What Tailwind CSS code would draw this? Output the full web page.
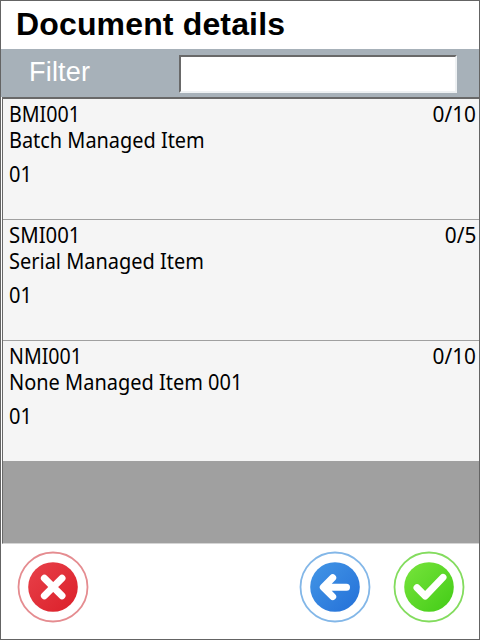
<!DOCTYPE html>
<html lang="en">
<head>
<meta charset="utf-8">
<title>Document details</title>
<script src="https://cdn.jsdelivr.net/npm/@tailwindcss/browser@4"></script>
</head>
<body class="w-[480px] h-[640px] overflow-hidden">
<div class="w-[480px] h-[640px] flex flex-col border border-[#646464] bg-white text-black">
  <header class="h-12 shrink-0 pl-[15px] font-['Liberation_Sans',sans-serif] font-bold text-[32px] tracking-[0.15px] leading-[46px] whitespace-nowrap">Document details</header>
  <div class="h-[48px] shrink-0 bg-[#a7b1b9] flex items-start">
    <label for="filter" class="w-[178px] pl-7 font-['Liberation_Sans',sans-serif] text-[27px] tracking-[0.2px] leading-[46px] text-white">Filter</label>
    <input id="filter" type="text" class="mt-[6px] w-[278px] h-[38px] bg-white border-2 border-t-[#696969] border-l-[#696969] border-b-[#eef1f3] border-r-[#eef1f3] outline-none">
  </div>
  <main class="h-[447px] shrink-0 ml-px bg-[#a0a0a0] border-t-2 border-l border-[#696969] border-b border-b-[#d5d5d5] font-['Noto_Sans',sans-serif] text-[22px] leading-[26px]">
    <section class="h-[121px] bg-[#f5f5f5] border-b border-[#a0a0a0] pl-[6px] pr-[3px] pt-px whitespace-nowrap">
      <div class="flex justify-between"><span class="origin-left scale-x-[0.893]">BMI001</span><span class="origin-right scale-x-[0.945]">0/10</span></div>
      <div class="w-fit origin-left scale-x-[0.905]">Batch Managed Item</div>
      <div class="w-fit mt-2 origin-left scale-x-[0.91]">01</div>
    </section>
    <section class="h-[121px] bg-[#f5f5f5] border-b border-[#a0a0a0] pl-[6px] pr-[3px] pt-px whitespace-nowrap">
      <div class="flex justify-between"><span class="origin-left scale-x-[0.925]">SMI001</span><span class="origin-right scale-x-[0.945]">0/5</span></div>
      <div class="w-fit origin-left scale-x-[0.908]">Serial Managed Item</div>
      <div class="w-fit mt-2 origin-left scale-x-[0.91]">01</div>
    </section>
    <section class="h-[120px] bg-[#f5f5f5] pl-[6px] pr-[3px] pt-px whitespace-nowrap">
      <div class="flex justify-between"><span class="origin-left scale-x-[0.89]">NMI001</span><span class="origin-right scale-x-[0.945]">0/10</span></div>
      <div class="w-fit origin-left scale-x-[0.908]">None Managed Item 001</div>
      <div class="w-fit mt-2 origin-left scale-x-[0.91]">01</div>
    </section>
  </main>
  <footer class="flex-1 flex items-start pt-[7px] pl-4">
    <button aria-label="Cancel" class="mr-[210px]">
      <svg class="block" width="72" height="72" viewBox="0 0 72 72" fill="none">
        <defs><linearGradient id="r" x1="0" y1="0" x2="1" y2="1"><stop stop-color="#e8414a"/><stop offset="1" stop-color="#db1f29"/></linearGradient></defs>
        <circle cx="36" cy="36" r="34.5" stroke="#e58c90" stroke-width="1.8"/>
        <circle cx="36" cy="36" r="24.8" fill="url(#r)"/>
        <path d="M27.4 27.2 45 44.8M45 27.2 27.4 44.8" stroke="#fff" stroke-width="7" stroke-linecap="round"/>
      </svg>
    </button>
    <button aria-label="Back" class="mr-[22px]">
      <svg class="block" width="72" height="72" viewBox="0 0 72 72" fill="none">
        <defs><linearGradient id="b" x1="0" y1="0" x2="1" y2="1"><stop stop-color="#4396e6"/><stop offset="1" stop-color="#2470d8"/></linearGradient></defs>
        <circle cx="36" cy="36" r="34.5" stroke="#83b7e8" stroke-width="1.8"/>
        <circle cx="36" cy="36" r="24.8" fill="url(#b)"/>
        <path d="M33.7 26.8 24.3 36.2 33.7 45.6M25 36.2H47.5" stroke="#fff" stroke-width="7" stroke-linecap="round" stroke-linejoin="round"/>
      </svg>
    </button>
    <button aria-label="Confirm">
      <svg class="block" width="72" height="72" viewBox="0 0 72 72" fill="none">
        <defs><linearGradient id="g" x1="0" y1="0" x2="1" y2="1"><stop stop-color="#78e43c"/><stop offset="1" stop-color="#42cc16"/></linearGradient></defs>
        <circle cx="36" cy="36" r="34.5" stroke="#83dc5e" stroke-width="1.8"/>
        <circle cx="36" cy="36" r="24.8" fill="url(#g)"/>
        <path d="M24 36.8 32.2 45 50 26.4" stroke="#fff" stroke-width="7" stroke-linecap="round" stroke-linejoin="round"/>
      </svg>
    </button>
  </footer>
</div>
</body>
</html>
